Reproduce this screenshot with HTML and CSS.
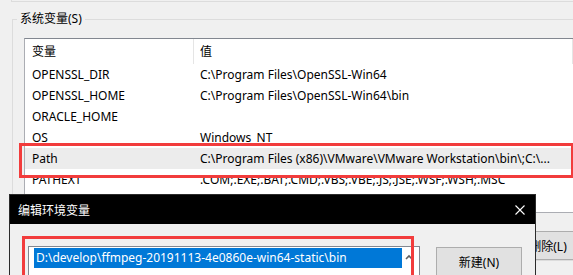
FILE: index.html
```html
<!DOCTYPE html>
<html lang="zh-CN">
<head>
  <meta charset="UTF-8">
  <title>系统变量</title>
  <link rel="stylesheet" href="styles.css">
</head>
<body>
  <div class="topline"></div>

  <fieldset class="group">
    <legend>系统变量(S)</legend>
    <div class="listview">
      <div class="lv-head">
        <div class="cell name">变量</div>
        <div class="cell value">值</div>
      </div>
      <div class="lv-row"><div class="cell name">OPENSSL_DIR</div><div class="cell value">C:\Program Files\OpenSSL-Win64</div></div>
      <div class="lv-row"><div class="cell name">OPENSSL_HOME</div><div class="cell value">C:\Program Files\OpenSSL-Win64\bin</div></div>
      <div class="lv-row"><div class="cell name">ORACLE_HOME</div><div class="cell value"></div></div>
      <div class="lv-row"><div class="cell name">OS</div><div class="cell value">Windows_NT</div></div>
      <div class="lv-row selected"><div class="cell name">Path</div><div class="cell value">C:\Program Files (x86)\VMware\VMware Workstation\bin\;C:\...</div></div>
      <div class="lv-row"><div class="cell name">PATHEXT</div><div class="cell value">.COM;.EXE;.BAT;.CMD;.VBS;.VBE;.JS;.JSE;.WSF;.WSH;.MSC</div></div>
    </div>
    <div class="group-buttons">
      <button class="btn">删除(L)</button>
    </div>
  </fieldset>

  <!-- red marks drawn on top of the screenshot -->
  <div class="mark mark-path"></div>

  <div class="dialog">
    <div class="titlebar">
      <span class="title">编辑环境变量</span>
      <span class="close">
        <svg width="10" height="10" viewBox="0 0 10 10">
          <path d="M0.5 0.5 L9.5 9.5 M9.5 0.5 L0.5 9.5" stroke="#fff" stroke-width="1.1" fill="none"/>
        </svg>
      </span>
    </div>
    <div class="dlg-body">
      <div class="pathlist">
        <div class="pathitem">D:\develop\ffmpeg-20191113-4e0860e-win64-static\bin</div>
        <div class="vscroll">
          <svg width="17" height="17" viewBox="0 0 17 17">
            <path d="M4 11 L7 8 L10 11" stroke="#606060" stroke-width="1.6" fill="none"/>
          </svg>
        </div>
      </div>
      <button class="btn btn-new">新建(N)</button>
    </div>
  </div>

  <div class="mark mark-input"></div>
</body>
</html>
```

FILE: styles.css
```css
html, body {
  margin: 0;
  padding: 0;
}
body {
  position: relative;
  width: 573px;
  height: 275px;
  overflow: hidden;
  background: #f0f0f0;
  font-family: "Noto Sans", "Noto Sans CJK SC", sans-serif;
  font-size: 12px;
  color: #000;
}

/* edge of the box above */
.topline {
  margin-left: 11px;
  height: 1px;
  border-left: 1px solid #dcdcdc;
  border-bottom: 1px solid #dcdcdc;
}

/* ─────────── system variables group ─────────── */
.group {
  box-sizing: border-box;
  width: 600px;
  margin: 9px 0 0 12px;
  padding: 11px 0 0 11px;
  border: 1px solid #dcdcdc;
  min-width: 0;
}
.group legend {
  margin-left: -7px;
  padding: 0 3px;
  line-height: 16px;
}

.listview {
  box-sizing: border-box;
  width: 571px;
  height: 175px;
  background: #fff;
  border: 1px solid #abadb3;
  border-top-color: #828790;
}
.lv-head,
.lv-row {
  display: grid;
  grid-template-columns: 169px 379px;
}
.lv-head {
  height: 25px;
  line-height: 25px;
}
.lv-head .cell {
  border-right: 1px solid #e5e5e5;
}
.lv-row {
  height: 21px;
  line-height: 21px;
}
.lv-row.selected {
  background: #ececec;
}
.cell {
  white-space: nowrap;
  overflow: hidden;
}
.cell.name {
  padding-left: 7px;
}
.cell.value {
  padding-left: 6px;
}

.group-buttons {
  display: flex;
  justify-content: flex-end;
  width: 571px;
  margin-top: 18px;
}

.btn {
  box-sizing: border-box;
  width: 94px;
  height: 29px;
  padding: 0;
  font: inherit;
  color: #000;
  background: #e1e1e1;
  border: 1px solid #adadad;
}

/* ─────────── red annotation boxes ─────────── */
.mark {
  position: absolute;
  box-sizing: border-box;
  border: 3px solid #f23c3c;
  z-index: 5;
}
.mark-path {
  left: 19px;
  top: 143px;
  width: 555px;
  height: 35px;
}
.mark-input {
  left: 22px;
  top: 236px;
  width: 392px;
  height: 60px;
}

/* ─────────── edit dialog ─────────── */
.dialog {
  position: absolute;
  left: 9px;
  top: 194px;
  box-sizing: border-box;
  width: 527px;
  height: 110px;
  background: #f0f0f0;
  border: 1px solid #2b2b2b;
  z-index: 3;
}
.titlebar {
  display: flex;
  align-items: center;
  justify-content: space-between;
  height: 29px;
  padding-left: 8px;
  background: #000;
  color: #fff;
}
.close {
  display: flex;
  align-items: center;
  justify-content: center;
  width: 30px;
  height: 29px;
}

.dlg-body {
  display: flex;
  align-items: flex-start;
  gap: 16px;
  padding: 22px 0 0 18px;
}
.pathlist {
  box-sizing: border-box;
  display: flex;
  width: 392px;
  height: 60px;
  padding: 1px 0 0 5px;
  background: #fff;
  border: 1px solid #828790;
}
.pathitem {
  flex: 1;
  height: 20px;
  line-height: 20px;
  padding-left: 2px;
  background: #0078d7;
  color: #fff;
  white-space: nowrap;
  overflow: hidden;
}
.vscroll {
  width: 17px;
}

.btn-new {
  width: 86px;
  height: 30px;
  margin-top: 1px;
}
```
